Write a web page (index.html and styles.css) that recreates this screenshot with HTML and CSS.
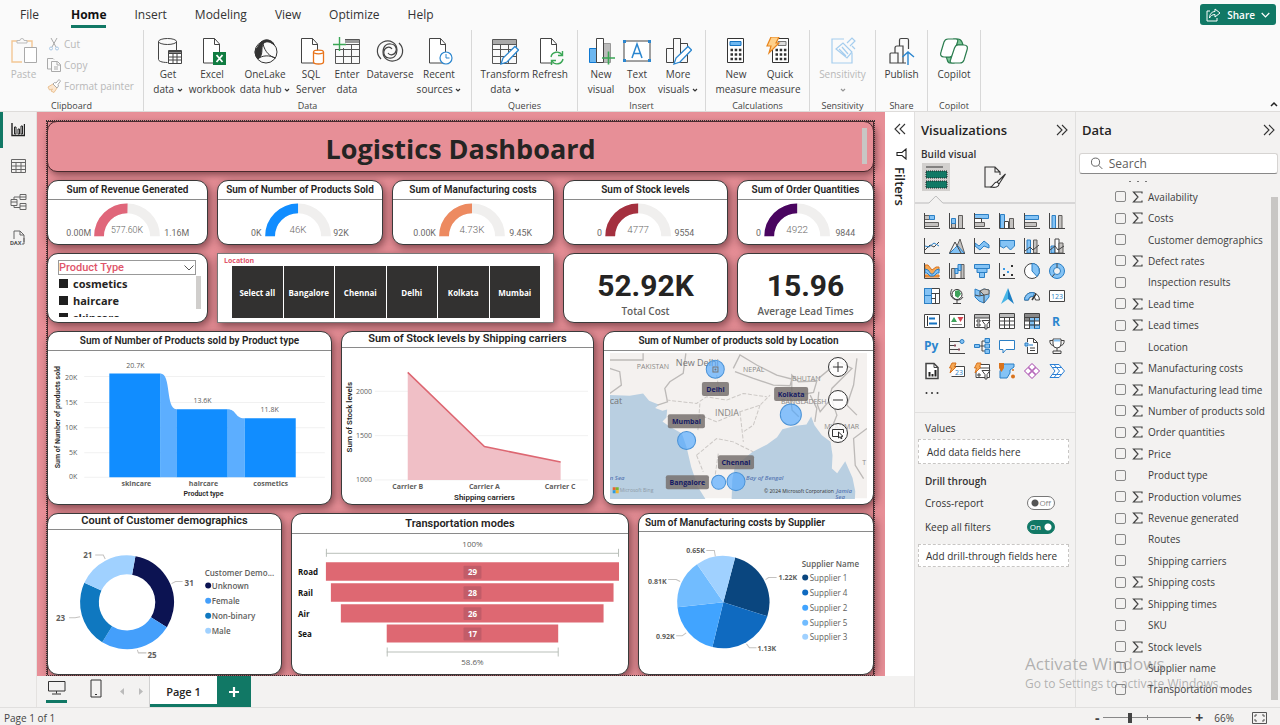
FILE: index.html
```html
<!DOCTYPE html>
<html lang="en">
<head>
<meta charset="utf-8">
<title>Logistics Dashboard</title>
<link rel="stylesheet" href="styles.css">
</head>
<body>
<svg class="defs" aria-hidden="true">
  <symbol id="sigma" viewBox="0 0 10 12"><path d="M9.5 2.5V1H1l4.5 5L1 11h8.5V9.5" fill="none" stroke="#444" stroke-width="1.2"/></symbol>
  <symbol id="chev" viewBox="0 0 6 6"><path d="M1 2l2 2 2-2" fill="none" stroke="#333" stroke-width="1.2"/></symbol>
  <symbol id="dbl" viewBox="0 0 12 12"><path d="M1 1l5 5-5 5M6 1l5 5-5 5" fill="none" stroke="#333" stroke-width="1.1"/></symbol>
  <symbol id="page" viewBox="0 0 28 28"><path d="M5.500 1.500h11l5 5.500v19h-16z" fill="#fff" stroke="#444"/><path d="M16.500 1.500v6h5" fill="none" stroke="#444"/></symbol>
</svg>
<div class="app">
  <header class="menubar">
    <nav class="menu">
      <button>File</button><button class="current">Home</button><button>Insert</button><button>Modeling</button><button>View</button><button>Optimize</button><button>Help</button>
    </nav>
    <button class="share">
      <svg width="15" height="14" viewBox="0 0 15 14" fill="none" stroke="#fff"><path d="M4 3H1v10h10v-3"/><path d="M9 1l5 4-5 4V6.500C6 6.500 4.500 8 3.500 10 3.500 6 6 3.500 9 3.500z"/></svg>
      Share
      <svg width="9" height="6" viewBox="0 0 9 6" fill="none" stroke="#fff" stroke-width="1.200"><path d="M.7 1l3.800 4L8.300 1"/></svg>
    </button>
  </header>

  <div class="ribbon">
    <section class="group clip">
      <div class="tools">
        <button class="tool off w50"><svg viewBox="0 0 28 28" fill="none"><path d="M7 4H2v21h10M17 4h5v6" stroke="#f3c795" stroke-width="1.400"/><path d="M7 6V3.500h3a2 2 0 0 1 4 0h3V6z" stroke="#bbb"/><path d="M14.500 10.500h12v15h-12z" stroke="#aaa" fill="#fff"/></svg><span>Paste</span></button>
        <div class="minis">
          <button class="mini"><svg viewBox="0 0 14 14" fill="none"><path d="M4 1l5 9M10 1L5 10" stroke="#aaa"/><circle cx="4" cy="11.500" r="1.500" stroke="#a9c8e6"/><circle cx="10" cy="11.500" r="1.500" stroke="#a9c8e6"/></svg>Cut</button>
          <button class="mini"><svg viewBox="0 0 14 14" fill="none" stroke="#aaa"><path d="M4 11H.5V.5H6l1 1"/><path d="M4.500 3.500h6l3 3v7h-9zM10 3.500V7h3M7 9h4M7 11h4"/></svg>Copy</button>
          <button class="mini"><svg viewBox="0 0 14 14" fill="none"><path d="M1 8l5-3 4 4-3 4.500-3-1.500 1.500-2-3 1z" fill="#fbe6cf" stroke="#eac193"/><path d="M6 5l4 4 1.500-2-.5-1.500L13.500 2 12 .5 9 4l-1.500-.5z" fill="#fff" stroke="#aaa"/></svg>Format painter</button>
        </div>
      </div>
      <h6>Clipboard</h6>
    </section>
    <section class="group">
      <div class="tools pad4">
        <button class="tool w40"><svg viewBox="0 0 28 28" fill="none" stroke="#444"><path d="M4.500 4.500v18c0 1.500 3 3 9 3M22.500 4.500V13"/><ellipse cx="13.500" cy="4.500" rx="9" ry="3"/><path d="M14.500 13.500h13v13h-13z" fill="#fff"/><path d="M14.500 14.500h13v2h-13z" fill="#888"/><path d="M14.500 20h13M14.500 23h13M19 17v9M23 17v9"/></svg><span>Get<br>data <svg class="cv"><use href="#chev"/></svg></span></button>
        <button class="tool w48"><svg viewBox="0 0 28 28"><use href="#page"/><path d="M15 15h13v13H15z" fill="#107c41"/><path d="M18.500 18l6 7M24.500 18l-6 7" stroke="#fff" stroke-width="1.800"/></svg><span>Excel<br>workbook</span></button>
        <button class="tool w58"><svg viewBox="0 0 28 28" fill="none" stroke="#333"><circle cx="15" cy="15" r="11"/><path d="M10 5a9 9 0 0 1 10-1c2 1 3 3 3 4-4-4-9-4-11-1-2 4 0 10-3 13l-2 2c-3-4-4-8-1-11z" fill="#333"/><path d="M12 7c2 8 7 13 13 14M7 22c4-4 12-4 17-1" /></svg><span>OneLake<br>data hub <svg class="cv"><use href="#chev"/></svg></span></button>
        <button class="tool w34"><svg viewBox="0 0 28 28"><use href="#page" x="-1"/><path d="M16.500 15v10c0 1.300 2 2 5 2s5-.7 5-2V15" fill="#fff" stroke="#e8741c" stroke-width="1.300"/><ellipse cx="21.500" cy="15" rx="5" ry="1.800" fill="#fff" stroke="#e8741c" stroke-width="1.300"/></svg><span>SQL<br>Server</span></button>
        <button class="tool w38"><svg viewBox="0 0 28 28" fill="none" stroke="#555"><path d="M12 2.500h14.500v24h-24V12M2.500 12.500h24M2.500 19.500h24M10.500 11v15M18.500 7v19M12 7.500h14.500"/><path d="M12 3h14v3H12z" fill="#999" stroke="none"/><path d="M0 7.500h13M6.500 0v14" stroke="#3aa655" stroke-width="1.400"/></svg><span>Enter<br>data</span></button>
        <button class="tool w48"><svg viewBox="0 0 28 28" fill="none" stroke="#444" stroke-width="1.200"><path d="M5 22C-1 16 1 8 7 5c7-3 14 1 14 8 0 6-4 9-8 8-4 0-6-4-5-7 1-4 6-5 8-2"/><path d="M23 6c6 6 4 14-2 17-7 3-14-1-14-8 0-6 4-9 8-8 4 0 6 4 5 7-1 4-6 5-8 2"/></svg><span>Dataverse</span></button>
        <button class="tool w50"><svg viewBox="0 0 28 28"><use href="#page" x="-1"/><circle cx="21" cy="21" r="6" fill="#fff" stroke="#2b86cf" stroke-width="1.200"/><path d="M21 17v4h3.500" fill="none" stroke="#2b86cf"/></svg><span>Recent<br>sources <svg class="cv"><use href="#chev"/></svg></span></button>
      </div>
      <h6>Data</h6>
    </section>
    <section class="group">
      <div class="tools pad8">
        <button class="tool w50"><svg viewBox="0 0 28 28" fill="none" stroke="#555"><path d="M1.500 2.500h24v24h-24zM1.500 12.500h24M1.500 19.500h24M9.500 7v19M17.500 7v19M1.500 7.500h24"/><path d="M2 3h23v4H2z" fill="#aaa" stroke="none"/><path d="M10 27l2-6L24 9.500l3.500 3.500L16 25z" fill="#fff" stroke="#2b86cf" stroke-width="1.300"/></svg><span>Transform<br>data <svg class="cv"><use href="#chev"/></svg></span></button>
        <button class="tool w40"><svg viewBox="0 0 28 28"><use href="#page" x="-1"/><circle cx="21" cy="21" r="7" fill="#fafafa"/><g fill="none" stroke="#3aa655" stroke-width="1.400"><path d="M15 20a6 6 0 0 1 11-2M27 22a6 6 0 0 1-11 2"/><path d="M26.500 14v4.500H22M15.500 28v-4.500H20"/></g></svg><span>Refresh</span></button>
      </div>
      <h6>Queries</h6>
    </section>
    <section class="group">
      <div class="tools pad8">
        <button class="tool w30"><svg viewBox="0 0 28 28"><path d="M2.500 11.500h7v14h-7z" fill="#6db7f0" stroke="#0f78d1"/><path d="M16.500 6.500h7v19h-7z" fill="#bbb" stroke="#999"/><path d="M9.500 1.500h7v24h-7z" fill="#fff" stroke="#444"/><path d="M15 21h13M21.500 14.500v13" stroke="#3aa655" stroke-width="1.600"/></svg><span>New<br>visual</span></button>
        <button class="tool w42"><svg viewBox="0 0 28 28"><path d="M1 4h26v20H1z" fill="#fff" stroke="#444"/><path d="M9 21l5-14 5 14M11 16.500h6" fill="none" stroke="#2b86cf" stroke-width="1.500"/><g fill="#2b86cf"><path d="M0 3h3v3H0zM25 3h3v3h-3zM0 22h3v3H0zM25 22h3v3h-3z"/></g></svg><span>Text<br>box</span></button>
        <button class="tool w40"><svg viewBox="0 0 28 28" fill="none"><path d="M2.500 11.500h7v14h-7zM9.500 1.500h7v24h-7zM16.500 6.500h7v19h-7z" stroke="#444"/><path d="M10 27l2-6L24 9.500l3.500 3.500L16 25z" fill="#fff" stroke="#2b86cf" stroke-width="1.300"/></svg><span>More<br>visuals <svg class="cv"><use href="#chev"/></svg></span></button>
      </div>
      <h6>Insert</h6>
    </section>
    <section class="group">
      <div class="tools pad8">
        <button class="tool w44"><svg viewBox="0 0 28 28"><path d="M5.500 1.500h16v24h-16z" fill="#fff" stroke="#333"/><path d="M8 4.500h11v4H8z" fill="#6db7f0" stroke="#1673c0"/><path d="M8.500 13h11M8.500 17.500h11M8.500 22h11" stroke="#333" stroke-width="2.500" stroke-dasharray="2.500 1.700"/></svg><span>New<br>measure</span></button>
        <button class="tool w44"><svg viewBox="0 0 28 28"><path d="M6.500 1.500h16v24h-16z" fill="#fff" stroke="#333"/><path d="M12 4.500h8v4h-8z" fill="#ddd" stroke="#777"/><path d="M9.500 13h11M9.500 17.500h11M9.500 22h11" stroke="#333" stroke-width="2.500" stroke-dasharray="2.500 1.700"/><path d="M5 0h8l-3 6h3L3 16l2-7H1z" fill="#ffd08a" stroke="#e8841c" stroke-width="1.200"/></svg><span>Quick<br>measure</span></button>
      </div>
      <h6>Calculations</h6>
    </section>
    <section class="group">
      <div class="tools">
        <button class="tool off w65"><svg viewBox="0 0 28 28" fill="none" stroke="#a5cdee" stroke-width="1.200"><path d="M15 2H3v24h20V16"/><path d="M7 12l7-6 9 9-5 6zM10 12l7 7M13 10l6 7"/><path d="M18 6l5-5 3 3-5 5M23 9l3 3"/></svg><span>Sensitivity<br><svg class="cv"><use href="#chev"/></svg></span></button>
      </div>
      <h6>Sensitivity</h6>
    </section>
    <section class="group">
      <div class="tools">
        <button class="tool w51"><svg viewBox="0 0 28 28" fill="none" stroke="#444" stroke-width="1.200"><path d="M2 26V17q0-1 1-1h7v10zM7 16v-5q0-2 2-2h6v17M11.500 9V3q0-1.500 1.500-1.500h6q1.500 0 1.500 1.500v9M10 26h8"/><path d="M20 28V15M14.500 20l5.500-5 6 5" stroke="#2b86cf" stroke-width="1.400"/></svg><span>Publish</span></button>
      </div>
      <h6>Share</h6>
    </section>
    <section class="group">
      <div class="tools">
        <button class="tool w52"><svg viewBox="0 0 28 28" stroke="#2b7d4f" stroke-width="1.200" fill="none"><path d="M14 2h4c2 0 3 1 4 3l1 3h-6zM14 26h-4c-3 0-2-3-4-6h8z" fill="#7fc99a"/><path d="M8 2h8c2 0 2 1 1.500 3l-4 12c-.7 2-1.500 3-4 3H4c-3 0-4-2-3-5l3-10c.7-2 2-3 4-3z" fill="#fff"/><path d="M19 8h5c3 0 4 2 3 5l-3 10c-.7 2-2 3-4 3h-8c-2 0-2-2-1.500-3l4-12c.7-2 2-3 3.500-3z" fill="#fff"/></svg><span>Copilot</span></button>
      </div>
      <h6>Copilot</h6>
    </section>
    <button class="collapse" aria-label="Collapse ribbon"><svg width="8" height="6" viewBox="0 0 8 6"><path d="M1 5l3-3 3 3" fill="none" stroke="#222" stroke-width="1.500"/></svg></button>
  </div>

  <div class="work">
    <nav class="rail">
      <button class="active" aria-label="Report view"><svg width="14" height="14" viewBox="0 0 14 14"><path d="M1 0v12.500h12.500V1" fill="none" stroke="#222" stroke-width="1.400"/><path d="M3.500 4h1.500v7H3.500zM7 6h1.500v5H7zM10 3h1.500v8H10z" fill="#fff" stroke="#222"/></svg></button>
      <button aria-label="Table view"><svg width="15" height="14" viewBox="0 0 15 14" fill="none" stroke="#666"><path d="M.5.500h14v13H.5zM.5 3.500h14M.5 7h14M.5 10.500h14M5 3.500v10M10 3.500v10"/></svg></button>
      <button aria-label="Model view"><svg width="17" height="16" viewBox="0 0 17 16" fill="none" stroke="#666"><path d="M1 5.500h6v6H1zM10 .5h6v5h-6zM10 9.500h6v6h-6zM1 8h6M10 3h6M10 12h6M4 5V3h6M4 11.500v2h6"/></svg></button>
      <button aria-label="DAX query view"><svg width="17" height="16" viewBox="0 0 17 16" fill="none" stroke="#666"><path d="M4 9V1h6l4 4v7M10 1v4h4M12 14h2V8"/><text x="0" y="15" class="dax">DAX</text></svg></button>
    </nav>

    <div class="center">
      <div class="stage">
        <main class="canvas">
          <div class="report">
            <div class="banner"><h1>Logistics Dashboard</h1><i class="thumb"></i></div>

            <div class="row five">
              <article class="card"><h2 class="t10">Sum of Revenue Generated</h2>
                <svg viewBox="48 200 159 45"><g class="arc"><path class="rest" d="M98.500 237a28.500 28.500 0 0 1 57 0"/><path stroke="#e0667a" d="M98.500 237a28.500 28.500 0 0 1 29-28.500"/></g><text class="g10" x="65" y="237">0.00M</text><text class="g9" x="127" y="234">577.60K</text><text class="g10" x="165" y="237">1.16M</text></svg></article>
              <article class="card"><h2 class="t10">Sum of Number of Products Sold</h2>
                <svg viewBox="218 200 164 45"><g class="arc"><path class="rest" d="M269.500 237a28.500 28.500 0 0 1 57 0"/><path stroke="#118dff" d="M269.500 237a28.500 28.500 0 0 1 28.500-28.500"/></g><text class="g10" x="250" y="237">0K</text><text class="g10 mid" x="298" y="234">46K</text><text class="g10" x="334" y="237">92K</text></svg></article>
              <article class="card"><h2 class="t10">Sum of Manufacturing costs</h2>
                <svg viewBox="394 200 160 45"><g class="arc"><path class="rest" d="M444.500 237a28.500 28.500 0 0 1 57 0"/><path stroke="#ed8a60" d="M444.500 237a28.500 28.500 0 0 1 28.500-28.500"/></g><text class="g10" x="413" y="237">0.00K</text><text class="g10 mid" x="473" y="234">4.73K</text><text class="g10" x="511" y="237">9.45K</text></svg></article>
              <article class="card"><h2 class="t10">Sum of Stock levels</h2>
                <svg viewBox="564 200 163 45"><g class="arc"><path class="rest" d="M609.500 237a28.500 28.500 0 0 1 57 0"/><path stroke="#a4303f" d="M609.500 237a28.500 28.500 0 0 1 28.500-28.500"/></g><text class="g10" x="596" y="237">0</text><text class="g10 mid" x="638" y="234">4777</text><text class="g10" x="675" y="237">9554</text></svg></article>
              <article class="card"><h2 class="t10">Sum of Order Quantities</h2>
                <svg viewBox="738 200 135 45"><g class="arc"><path class="rest" d="M768.500 237a28.500 28.500 0 0 1 57 0"/><path stroke="#4a0560" d="M768.500 237a28.500 28.500 0 0 1 28.500-28.500"/></g><text class="g10" x="755" y="237">0</text><text class="g10 mid" x="797" y="234">4922</text><text class="g10" x="836" y="237">9844</text></svg></article>
            </div>

            <div class="row five">
              <article class="card slicer">
                <button class="slicer-head">Product Type<svg width="10" height="6" viewBox="0 0 10 6"><path d="M.5.500L5 5 9.500.5" fill="none" stroke="#555"/></svg></button>
                <div class="options">
                  <label><input type="checkbox">cosmetics</label>
                  <label><input type="checkbox">haircare</label>
                  <label><input type="checkbox">skincare</label>
                  <i class="thumb"></i>
                </div>
              </article>
              <article class="card square wide">
                <h3>Location</h3>
                <div class="tiles"><button>Select all</button><button>Bangalore</button><button>Chennai</button><button>Delhi</button><button>Kolkata</button><button>Mumbai</button></div>
              </article>
              <article class="card kpi"><strong>52.92K</strong><span>Total Cost</span></article>
              <article class="card kpi"><strong>15.96</strong><span>Average Lead Times</span></article>
            </div>

            <div class="row three-a">
              <article class="card"><h2 class="t10 h19">Sum of Number of Products sold by Product type</h2>
                <svg viewBox="48 351 282 152">
                  <path class="gl" d="M84 376.500h240M84 402.500h240M84 427.500h240M84 452.500h240M84 477h240"/>
                  <path fill="#5caeff" d="M160 373.500c11 0 5 35.500 16 35.500V477h-16zM227 409c9 0 7 9 17 9V477h-17z"/>
                  <path fill="#118dff" d="M109 373.500h51V477h-51zM176 409h51V477h-51zM244 418h51V477h-51z"/>
                  <g class="s7 end"><text x="77" y="380">20K</text><text x="77" y="405">15K</text><text x="77" y="430">10K</text><text x="77" y="455">5K</text><text x="77" y="479">0K</text></g>
                  <g class="s7 mid"><text x="135" y="368">20.7K</text><text x="202" y="403">13.6K</text><text x="269" y="412">11.8K</text></g>
                  <g class="s7 mid bold"><text x="136" y="486">skincare</text><text x="203" y="486">haircare</text><text x="270" y="486">cosmetics</text></g>
                  <text class="d7 mid" x="203" y="496">Product type</text>
                  <text class="d7 mid" transform="translate(60 417) rotate(-90)">Sum of Number of products sold</text>
                </svg></article>
              <article class="card"><h2 class="t12 h16">Sum of Stock levels by Shipping carriers</h2>
                <svg viewBox="343 348 252 155">
                  <path class="gl" d="M376 391h214M376 435.500h214M376 480h214"/>
                  <path fill="#f0bfc6" d="M409 372l77 74.500 76.500 15.500v18H409z"/>
                  <path fill="none" stroke="#dd6772" stroke-width="1.500" d="M409 372l77 74.500 76.500 15.500"/>
                  <g class="s7 end"><text x="373" y="394">2000</text><text x="373" y="438">1500</text><text x="373" y="482">1000</text></g>
                  <g class="s7 mid bold"><text x="409" y="489">Carrier B</text><text x="486" y="489">Carrier A</text><text x="562" y="489">Carrier C</text></g>
                  <text class="d8 mid" x="486" y="500">Shipping carriers</text>
                  <text class="d8 mid" transform="translate(353 417) rotate(-90)">Sum of Stock levels</text>
                </svg></article>
              <article class="card"><h2 class="t10 h19">Sum of Number of products sold by Location</h2>
                <div class="map">
                  <svg viewBox="610 353 257 145" preserveAspectRatio="xMidYMid slice">
                    <path fill="#f4f1ef" d="M610 353h257v145H610z"/>
                    <g transform="translate(600 325) scale(.3333)">
                      <path fill="#b9cfe1" d="M30 210l60 2 40-7 18 22 30 12-12 10 22 8 14-4-2 24-12 12 20 14 38 22 14 40 14 60 20 60 30 48H30zM395 522l2-60 8-40 30-24 22-18 44-22 30-22 16-24 40-10 32-4 14-24 10 26 22 30 26 20 6 40-2 40 16 14 24-36 22 50 8 40-2 40z"/>
                      <g fill="none" stroke="#bdbab8" stroke-width="4"><path d="M30 105h45l55 0V85M30 130l30 10 5 40-35 25M258 85l-8 60-40 25-15 20 8 40-30 10M400 130l20-40 50 30 60 30 45 12-5 20-50-2-60-20-55-20M575 150l20 20 55-2-10 34-20 4-45-4zM655 160l60-50 40 20-60 60-10 40-25 30-8-20 4-40M770 100l-10 80-20 60 30 30M690 210l20 60-16 40M570 205l6 50 20 20M630 210l20 40-6 40M800 310l-40 30 5 80 25 40"/></g>
                      <g fill="none" stroke="#ccc8c5" stroke-width="3" stroke-dasharray="12 5"><path d="M200 225l90 10 30-20 60 10 50-20 70 10M270 300l30-30 50 20 70-30 60-20 30-30M290 390l60-50 50 10 60 30M350 150l10 60M300 235l-6 80M420 260l10 90M355 385l-10 70M290 390l20 50M480 240l-20 60-30 20"/></g>
                    </g>
                    <g class="place"><text x="637" y="369">PAKISTAN</text><text x="743" y="372">NEPAL</text><text x="792" y="381">BHUTAN</text><text x="781" y="404">BANGLADESH</text><text x="824" y="429">MYANMAR</text><text x="862" y="465">T</text></g>
                    <text class="place big" x="715" y="416">INDIA</text><text class="place city" x="676" y="366">New Delhi</text><text class="place city" x="610" y="404">cat</text>
                    <g class="sea"><text x="746" y="480">Bay of Bengal</text><text x="610" y="480">n Sea</text><text x="836" y="493">Jamia</text><text x="835" y="499">Sea</text></g>
                    <g fill="#4fa8ff" fill-opacity=".65" stroke="#4a92d6"><circle cx="715.300" cy="369.300" r="9"/><circle cx="790.700" cy="414.500" r="10.500"/><circle cx="686.700" cy="440.300" r="9"/><circle cx="736" cy="481.300" r="9"/><circle cx="718.700" cy="482" r="7"/></g>
                    <path d="M713 367h5v5h-5z" fill="none" stroke="#777"/><circle cx="715.500" cy="369.500" r="1" fill="#777"/>
                    <g fill="#77716f" fill-opacity=".85"><rect x="702" y="382" width="27" height="14" rx="2"/><rect x="774" y="387" width="34" height="14" rx="2"/><rect x="668" y="414" width="37" height="14" rx="2"/><rect x="718" y="455" width="36" height="14" rx="2"/><rect x="666" y="475" width="43" height="14" rx="2"/></g>
                    <g class="pin mid"><text x="715.500" y="392">Delhi</text><text x="791" y="397">Kolkata</text><text x="686.500" y="424">Mumbai</text><text x="736" y="465">Chennai</text><text x="687.500" y="485">Bangalore</text></g>
                    <path fill="#e8622c" d="M613 487h3v3h-3z"/><path fill="#7bb42c" d="M616 487h3v3h-3z"/><path fill="#2b9be0" d="M613 490h3v3h-3z"/><path fill="#f3b52a" d="M616 490h3v3h-3z"/>
                    <text class="credit" x="620" y="492">Microsoft Bing</text><text class="credit dark" x="764" y="493">© 2024 Microsoft Corporation</text>
                  </svg>
                  <div class="zoomers">
                    <button aria-label="Zoom in"><svg viewBox="0 0 18 18"><path d="M9 4v10M4 9h10"/></svg></button>
                    <button aria-label="Zoom out"><svg viewBox="0 0 18 18"><path d="M4 9h10"/></svg></button>
                    <button aria-label="Select area"><svg viewBox="0 0 18 18"><path d="M9 12.500H3.500v-7h11V9"/><path fill="#fff" d="M9.500 8v6l1.500-1.200 1 2 1-.5-1-2h2z"/></svg></button>
                  </div>
                </div></article>
            </div>

            <div class="row three-b">
              <article class="card"><h2 class="t12 h16">Count of Customer demographics</h2>
                <svg viewBox="48 530 232 143">
                  <g transform="rotate(-79.700 126.700 601.700)" fill="none" stroke-width="18.700">
                    <circle cx="126.700" cy="601.700" r="37.400" pathLength="100" stroke="#0c1352" stroke-dasharray="31 69"/>
                    <circle cx="126.700" cy="601.700" r="37.400" pathLength="100" stroke="#449ffb" stroke-dasharray="25 75" stroke-dashoffset="-31"/>
                    <circle cx="126.700" cy="601.700" r="37.400" pathLength="100" stroke="#0f78c0" stroke-dasharray="23 77" stroke-dashoffset="-56"/>
                    <circle cx="126.700" cy="601.700" r="37.400" pathLength="100" stroke="#a0d1ff" stroke-dasharray="21 79" stroke-dashoffset="-79"/>
                  </g>
                  <path class="lead" d="M95 554.500h8l2 4M171 583l4-2h7M69 617h6l5-1M137 649l1 3h8"/>
                  <g class="s8 bold"><text x="83" y="558">21</text><text x="184" y="585">31</text><text x="56" y="620">23</text><text x="147" y="657">25</text></g>
                  <g class="s8 semi"><text x="204" y="575">Customer Demo...</text><text x="211" y="588">Unknown</text><text x="211" y="603">Female</text><text x="211" y="618">Non-binary</text><text x="211" y="633">Male</text></g>
                  <circle cx="207.500" cy="585" r="3" fill="#0c1352"/><circle cx="207.500" cy="600" r="3" fill="#449ffb"/><circle cx="207.500" cy="615" r="3" fill="#0f78c0"/><circle cx="207.500" cy="630" r="3" fill="#a0d1ff"/>
                </svg></article>
              <article class="card"><h2 class="t12 h20">Transportation modes</h2>
                <svg viewBox="292 534 337 139">
                  <path fill="#de6872" d="M326 561.500h294V580H326zM331 582.500h283.500V601H331zM341 603.500h263.500V622H341zM387 624h172v18H387z"/>
                  <g fill="#c25c68"><rect x="464" y="565" width="18" height="13" rx="1"/><rect x="464" y="585.500" width="18" height="13" rx="1"/><rect x="464" y="606.500" width="18" height="13" rx="1"/><rect x="464" y="627" width="18" height="13" rx="1"/></g>
                  <path fill="none" stroke="#b9bfb9" d="M326.500 548v8M619.500 548v8M326 552.500h294M387.500 647v9M559 647v9M387 651.500h172"/>
                  <g class="s8 mid"><text x="473" y="546">100%</text><text x="473" y="665">58.6%</text></g>
                  <g class="s8 mid white"><text x="473" y="574">29</text><text x="473" y="595">28</text><text x="473" y="616">26</text><text x="473" y="636">17</text></g>
                  <g class="s8 black"><text x="298" y="574">Road</text><text x="298" y="595">Rail</text><text x="298" y="616">Air</text><text x="298" y="636">Sea</text></g>
                </svg></article>
              <article class="card"><h2 class="t10 h18 left">Sum of Manufacturing costs by Supplier</h2>
                <svg viewBox="640 532 233 141">
                  <path fill="#0a467f" d="M724 601.500L735.750 557A46 46 0 0 1 767.800 615.500z"/>
                  <path fill="#0f6ac0" d="M724 601.500L767.800 615.500A46 46 0 0 1 713.100 646.200z"/>
                  <path fill="#41a4ff" d="M724 601.500L713.100 646.200A46 46 0 0 1 678.300 606.600z"/>
                  <path fill="#71bcff" d="M724 601.500L678.300 606.600A46 46 0 0 1 697.800 563.700z"/>
                  <path fill="#a0d1ff" d="M724 601.500L697.800 563.700A46 46 0 0 1 735.750 557z"/>
                  <path class="lead" d="M707 550h8l1 6M766 579l3-2h8M669 579h8l4 2M677 635h6l4-3M747 643l3 4h7"/>
                  <g class="s7 bold"><text x="687" y="553">0.65K</text><text x="779" y="579">1.22K</text><text x="649" y="583">0.81K</text><text x="657" y="638">0.92K</text><text x="758" y="650">1.13K</text></g>
                  <g class="s8"><text class="semi" x="802" y="567">Supplier Name</text><text x="810" y="580">Supplier 1</text><text x="810" y="595">Supplier 4</text><text x="810" y="610">Supplier 2</text><text x="810" y="625">Supplier 5</text><text x="810" y="639">Supplier 3</text></g>
                  <circle cx="805.500" cy="577" r="3" fill="#0a467f"/><circle cx="805.500" cy="592" r="3" fill="#0f6ac0"/><circle cx="805.500" cy="607" r="3" fill="#41a4ff"/><circle cx="805.500" cy="622" r="3" fill="#71bcff"/><circle cx="805.500" cy="636" r="3" fill="#a0d1ff"/>
                </svg></article>
            </div>
          </div>
        </main>
        <aside class="filters">
          <button aria-label="Expand filters"><svg class="flip" width="12" height="12"><use href="#dbl"/></svg></button>
          <svg width="11" height="12" viewBox="0 0 11 12"><path d="M10 1v10L6 7.500H1v-3h5z" fill="none" stroke="#222" stroke-width="1.100"/></svg>
          <span>Filters</span>
        </aside>
      </div>
      <div class="tabs">
        <button class="device on" aria-label="Desktop layout"><svg width="18" height="14" viewBox="0 0 18 14" fill="none" stroke="#333"><path d="M.5.500h16.500v9.500H.5zM8.500 10v2.500M4 13h9"/></svg></button>
        <button class="device" aria-label="Mobile layout"><svg width="12" height="19" viewBox="0 0 12 19" fill="none" stroke="#333"><path d="M1 1h10v17H1z"/><path d="M5 15.500h2"/></svg></button>
        <button class="step" aria-label="Previous page"><svg width="4" height="7" viewBox="0 0 4 7"><path d="M4 0v7L0 3.500z" fill="#bbb"/></svg></button>
        <button class="step" aria-label="Next page"><svg width="4" height="7" viewBox="0 0 4 7"><path d="M0 0v7l4-3.500z" fill="#bbb"/></svg></button>
        <button class="pagetab">Page 1</button>
        <button class="add" aria-label="New page"><svg width="10" height="10" viewBox="0 0 10 10"><path d="M5 0v10M0 5h10" stroke="#fff" stroke-width="2.200"/></svg></button>
      </div>
    </div>

    <aside class="viz">
      <div class="panehead"><h4>Visualizations</h4><button aria-label="Collapse pane"><svg width="12" height="12"><use href="#dbl"/></svg></button></div>
      <h5>Build visual</h5>
      <div class="modes">
        <button class="picked" aria-label="Build visual"><svg width="28" height="28" viewBox="0 0 28 28"><path d="M4 4h17" stroke="#333"/><path d="M4 8h21v7H4zM4 18h21v7H4z" fill="#117865" stroke="#222" stroke-dasharray="1 1"/></svg></button>
        <button aria-label="Format visual"><svg width="24" height="24" viewBox="0 0 24 24" fill="none" stroke="#333" stroke-width="1.100"><path d="M9 22H2V2h10l5 5v3M12 2v5h5"/><path d="M22.500 9L14 17l2 2zM14 17c-3 0-3 3-6 5 4 1 8 0 8-3" fill="#fff"/></svg></button>
      </div>
      <svg class="notch" viewBox="0 0 161 9" preserveAspectRatio="none"><path d="M0 8h14l7-7 7 7h133" fill="none" stroke="#bbb"/></svg>
      <div class="visuals">
        <button><svg viewBox="0 0 16 16"><path class="g" d="M.5 2.500h5v4h-5zM.5 9.500h14v4H.5z"/><path class="b" d="M5.500 2.500h5v4h-5z"/><path class="k" d="M.5 0v15.500H16"/></svg></button>
        <button><svg viewBox="0 0 16 16"><path class="g" d="M9.500 2.500h4v13h-4zM2.500 10h4v5h-4z"/><path class="b" d="M2.500 5.500h4v5h-4z"/><path class="k" d="M.5 0v15.500H16"/></svg></button>
        <button><svg viewBox="0 0 16 16"><path class="b" d="M.5 1.500h14v4H.5z"/><path class="w" d="M.5 5.500h7v4h-7z"/><path class="g" d="M.5 9.500h10v4H.5z"/><path class="k" d="M.5 0v15.500H16"/></svg></button>
        <button><svg viewBox="0 0 16 16"><path class="b" d="M1.500 1.500h4v14h-4z"/><path class="w" d="M5.500 8.500h4v7h-4z"/><path class="g" d="M10.500 5.500h4v10h-4z"/><path class="k" d="M.5 0v15.500H16"/></svg></button>
        <button><svg viewBox="0 0 16 16"><path class="b" d="M.5 2.500h14v4H.5z"/><path class="g" d="M.5 9.500h12v4H.5z"/><path class="k" d="M.5 0v15.500H16"/></svg></button>
        <button><svg viewBox="0 0 16 16"><path class="b" d="M3 2.500h3.500v13H3z"/><path class="g" d="M9.500 2.500H13v13H9.500z"/><path class="k" d="M.5 0v15.500H16"/></svg></button>

        <button><svg viewBox="0 0 16 16"><path class="k" d="M.5 0v15.500H16M1 12l5-5 4 2 5-5"/><path class="bl" d="M1 8l4 1 5-4 5 3"/></svg></button>
        <button><svg viewBox="0 0 16 16"><path class="g" d="M5 15L11 1l4.500 14z"/><path class="b" d="M.5 15.500l5-5 3-3 7 8z"/><path class="k" d="M.5 15L6 4l6 11M.5 15.500H16"/></svg></button>
        <button><svg viewBox="0 0 16 16"><path class="b" d="M1 5l4 3 5-5 5 4v3l-5-2-4 4-5-4z"/><path class="k" d="M.5 0v15.500H16"/></svg></button>
        <button><svg viewBox="0 0 16 16"><path class="b" d="M1 2.500h14.500V8l-4 4-4-4-3 2-3.500-2z"/><path class="k" d="M.5 0v15.500H16"/></svg></button>
        <button><svg viewBox="0 0 16 16"><path class="b" d="M3 2h3.500v13H3z"/><path class="g" d="M9.500 2H13v13H9.500z"/><path class="k" d="M.5 0v15.500H16M1 13l5-4 3 3 6-5"/></svg></button>
        <button><svg viewBox="0 0 16 16"><path class="b" d="M2 8h4v7H2z"/><path class="w" d="M6 1h4v14H6z"/><path class="g" d="M10 5h4v10h-4z"/><path class="k" d="M.5 0v15.500H16M1 12l5-4 3 4 6-4"/></svg></button>

        <button><svg viewBox="0 0 16 16"><path class="o" d="M1 2h3l4 5 4-3h3v4h-2l-4 5H6L3 8H1zM1 12h14v2H1z"/><path class="b" d="M1 6l3 1 3 4h2l3-4 3-1v4h-2l-3 3H6l-3-3H1z"/><path class="k" d="M.5 0v15.500H16"/></svg></button>
        <button><svg viewBox="0 0 16 16"><path class="g" d="M2.500 5.500H6v10H2.500zM12 1.500h3v14h-3z"/><path class="b" d="M6 5.500h3v5H6zM9 1.500h3v6H9z"/><path class="k" d="M.5 0v15.500H16"/></svg></button>
        <button><svg viewBox="0 0 16 16"><path class="b" d="M.5 1.500h15v4H.5zM3 5.500h10v4H3zM5.500 9.500h5v5h-5z"/></svg></button>
        <button><svg viewBox="0 0 16 16"><path d="M4 11h2v2H4zM12 2h2v2h-2zM12 11h2v2h-2z" fill="#333"/><path d="M4 5h2v2H4zM8 8h2v2H8z" fill="#3a9be8"/><path class="k" d="M.5 0v15.500H16"/></svg></button>
        <button><svg viewBox="0 0 16 16"><circle class="w" cx="8" cy="8" r="7.500"/><path class="b" d="M8 .5a7.500 7.500 0 0 1 5 13L8 8z"/></svg></button>
        <button><svg viewBox="0 0 16 16"><circle cx="8" cy="8" r="5.500" fill="none" stroke="#84c3f5" stroke-width="4"/><circle class="bl" cx="8" cy="8" r="7.500"/><circle class="bl" cx="8" cy="8" r="3.500"/><path class="k" d="M8 .5v4M3 14l2.500-3"/></svg></button>

        <button><svg viewBox="0 0 16 16"><path class="w" d="M.5.500h15v15H.5z"/><path class="b" d="M.5.500h7v7h-7zM.5 7.500h7v8h-7z"/><path class="k" d="M7.500 5.500h8M11.500 5.500v10M7.500 10.500h4"/></svg></button>
        <button><svg viewBox="0 0 16 16"><circle cx="8" cy="6.500" r="5" fill="#fff" stroke="#333"/><path d="M6 3l4-1 2 4-3 4-3-2z" fill="#3fa35b"/><path class="k" d="M3 1c-3 5-1 10 5 11 3 0 5-1 6-3M8 12v3M4 15.500h8"/></svg></button>
        <button><svg viewBox="0 0 16 16"><path class="b" d="M1 1l5 2 4-2 5 1v7l-5 6-5-2-4-4z"/><path class="g" d="M6 3l4-2 5 1v4l-5 1z"/><path class="k" d="M1 7l4 1 5-1v8M6 3v4"/></svg></button>
        <button><svg viewBox="0 0 16 16"><path d="M9 0L2 16l7-5z" fill="#47b5e6"/><path d="M9 0l6 16-6-5z" fill="#1c7fc4"/></svg></button>
        <button><svg viewBox="0 0 16 16"><path class="w" d="M.5 12a7.500 7.500 0 0 1 15 0h-4a3.500 3.500 0 0 0-7 0z"/><path class="b" d="M.5 12a7.500 7.500 0 0 1 10-7L9 8.500A3.500 3.500 0 0 0 4.500 12z"/><path d="M8 12l4-6" stroke="#333" stroke-width="1.500"/></svg></button>
        <button><svg viewBox="0 0 16 16"><path class="w" d="M.5 2.500h15v11H.5z"/><text class="num" x="2" y="11">123</text></svg></button>

        <button><svg viewBox="0 0 16 16"><path class="w" d="M.5 1.500h15v13H.5z"/><path d="M3.500 3v10" stroke="#333"/><path d="M5 5.500h6M5 10.500h8" stroke="#1673c0" stroke-width="2"/></svg></button>
        <button><svg viewBox="0 0 16 16"><path class="w" d="M.5 1.500h15v13H.5z"/><path d="M2 9l3-5 3 5z" fill="#3fa35b"/><path d="M8.500 4h6l-3 5z" fill="#d64550"/><path d="M3 11.500h10" stroke="#888"/></svg></button>
        <button><svg viewBox="0 0 16 16"><path class="w" d="M.5 1.500h15v13H.5z"/><path d="M1 2h14v3H1z" fill="#bbb"/><path class="k" d="M.5 5h15M3 7h3v2H3zM3 11h3v2H3z"/><path class="w" d="M8 7.500h8l-3 4V16h-2v-4.500z"/></svg></button>
        <button><svg viewBox="0 0 16 16"><path class="w" d="M.5.500h15v15H.5z"/><path d="M1 1h14v3H1z" fill="#bbb"/><path class="k" d="M.5 4.500h15M.5 8h15M.5 12h15M5.500 4v11M10.500 4v11"/></svg></button>
        <button><svg viewBox="0 0 16 16"><path class="w" d="M.5.500h15v15H.5z"/><path d="M1 1h14v3H1zM1 4h4v4H1z" fill="#888"/><path d="M6 4h9v4h-5v8H6z" fill="#84c3f5"/><path class="b" d="M5.500 8h5v4h-5zM10.500 12h5v3.500h-5z"/><path class="k" d="M.5 4.500h15M.5 8h15M.5 12h15M5.500 4v11M10.500 4v11"/></svg></button>
        <button><svg viewBox="0 0 16 16"><text class="letter" x="3" y="13">R</text></svg></button>

        <button><svg viewBox="0 0 16 16"><text class="letter" x="0" y="12">Py</text></svg></button>
        <button><svg viewBox="0 0 16 16"><path class="k" d="M.5 0v15.500H16M1 3.500h11M1 7.500h5M1 11.500h8"/><circle class="b" cx="13" cy="3.500" r="2"/><path d="M5 6.500h2v2H5zM9 10.500h2v2H9z" fill="#8a4a5a"/></svg></button>
        <button><svg viewBox="0 0 16 16"><path class="k" d="M5 8h3M8 3v10M8 3h3M8 8h3M8 13h3"/><path class="b" d="M.5 6.500h5v3h-5zM11 .5h4.500v4H11zM11 6h4.500v4H11zM11 11.500h4.500v4H11z"/></svg></button>
        <button><svg viewBox="0 0 16 16"><path d="M.5 2.500h15v9H7L4 15v-3.500H.5z" fill="#fff" stroke="#2b7fc4"/></svg></button>
        <button><svg viewBox="0 0 16 16"><path class="w" d="M3.500 4V.5h6l4 4v11h-10V9"/><path class="k" d="M9.500.5v4h4M6 10h5M6 12.500h5"/><path class="b" d="M1 5h3v3H1z"/><path d="M5 7h4" stroke="#1673c0"/></svg></button>
        <button><svg viewBox="0 0 16 16"><path class="w" d="M4 1h8v5q0 4-4 4T4 6z"/><path class="k" d="M4 2.500H.8q0 5 4 5M12 2.500h3.200q0 5-4 5M8 10v3M4 15.500h8v-2.500H4z"/><path d="M5 1.500h6v2H5z" fill="#84c3f5"/></svg></button>

        <button><svg viewBox="0 0 16 16"><path class="w" d="M2 .5h8l4 4v11H2z" stroke-width="1.500"/><path class="k" d="M10 .5v4h4"/><path d="M4.500 9h2v4.500h-2zM7.500 11h2v2.500h-2zM10.500 7h2v6.500h-2z" fill="#222"/></svg></button>
        <button><svg viewBox="0 0 16 16"><path class="w" d="M3 3.500h12.500v10h-13"/><text class="num" x="6" y="12">23</text><path class="o" d="M3 0h4L5.500 4H7L1 10l1.500-5H.5z"/></svg></button>
        <button><svg viewBox="0 0 16 16"><path class="w" d="M4 1.500h11.500v13H2V9"/><path class="k" d="M6 5h9M4 11h2v2H4z"/><path class="w" d="M8 7.500h8l-3 4V16h-2v-4.500z"/><path class="o" d="M3 0h4L5.500 4H7L1 10l1.500-5H.5z"/></svg></button>
        <button><svg viewBox="0 0 16 16"><path class="b" d="M5 1h10v3l-4 3v3l-3 5H1V8z"/><path d="M0 0h5v5L2.500 9 0 5z" fill="#d9731c"/><circle cx="14" cy="13.500" r="2" fill="#d9731c"/><circle cx="14" cy="7" r="1" fill="#d9731c"/></svg></button>
        <button><svg viewBox="0 0 16 16" fill="#fff" stroke="#a23ba8"><path d="M8 .5l3.500 3.500L8 7.500 4.500 4zM8 8.500l3.500 3.500L8 15.500 4.500 12zM4 4.500L7.500 8 4 11.500.5 8zM12 4.500L15.500 8 12 11.500 8.500 8z"/></svg></button>
        <button><svg viewBox="0 0 16 16" fill="#fff" stroke="#2b7fd4"><path d="M1 1.500h9l5.500 6.500-5.500 6.500H1L6 8zM5 1.500L10.500 8 5 14.500M3 4.500h9M3 11.500h9"/></svg></button>
      </div>
      <button class="more" aria-label="More visuals"><svg width="14" height="4" viewBox="0 0 14 4" fill="#333"><circle cx="1.500" cy="2" r="1"/><circle cx="7" cy="2" r="1"/><circle cx="12.500" cy="2" r="1"/></svg></button>
      <div class="wells">
        <p>Values</p>
        <div class="well">Add data fields here</div>
        <p class="strong">Drill through</p>
        <label class="switch">Cross-report<input type="checkbox"><span class="off-t">Off</span></label>
        <label class="switch">Keep all filters<input type="checkbox" checked><span class="on-t">On</span></label>
        <div class="well small">Add drill-through fields here</div>
      </div>
    </aside>

    <aside class="data">
      <div class="panehead"><h4>Data</h4><button aria-label="Collapse pane"><svg width="12" height="12"><use href="#dbl"/></svg></button></div>
      <label class="search"><svg width="13" height="13" viewBox="0 0 13 13" fill="none" stroke="#555"><circle cx="5" cy="5" r="4.500"/><path d="M8.500 8.500l4 4"/></svg><input type="search" placeholder="Search" aria-label="Search"></label>
      <div class="cut"></div>
      <div class="listwrap">
        <div class="fields">
          <label><input type="checkbox"><svg><use href="#sigma"/></svg>Availability</label>
          <label><input type="checkbox"><svg><use href="#sigma"/></svg>Costs</label>
          <label><input type="checkbox"><svg></svg>Customer demographics</label>
          <label><input type="checkbox"><svg><use href="#sigma"/></svg>Defect rates</label>
          <label><input type="checkbox"><svg></svg>Inspection results</label>
          <label><input type="checkbox"><svg><use href="#sigma"/></svg>Lead time</label>
          <label><input type="checkbox"><svg><use href="#sigma"/></svg>Lead times</label>
          <label><input type="checkbox"><svg></svg>Location</label>
          <label><input type="checkbox"><svg><use href="#sigma"/></svg>Manufacturing costs</label>
          <label><input type="checkbox"><svg><use href="#sigma"/></svg>Manufacturing lead time</label>
          <label><input type="checkbox"><svg><use href="#sigma"/></svg>Number of products sold</label>
          <label><input type="checkbox"><svg><use href="#sigma"/></svg>Order quantities</label>
          <label><input type="checkbox"><svg><use href="#sigma"/></svg>Price</label>
          <label><input type="checkbox"><svg></svg>Product type</label>
          <label><input type="checkbox"><svg><use href="#sigma"/></svg>Production volumes</label>
          <label><input type="checkbox"><svg><use href="#sigma"/></svg>Revenue generated</label>
          <label><input type="checkbox"><svg></svg>Routes</label>
          <label><input type="checkbox"><svg></svg>Shipping carriers</label>
          <label><input type="checkbox"><svg><use href="#sigma"/></svg>Shipping costs</label>
          <label><input type="checkbox"><svg><use href="#sigma"/></svg>Shipping times</label>
          <label><input type="checkbox"><svg></svg>SKU</label>
          <label><input type="checkbox"><svg><use href="#sigma"/></svg>Stock levels</label>
          <label><input type="checkbox"><svg></svg>Supplier name</label>
          <label><input type="checkbox"><svg></svg>Transportation modes</label>
        </div>
        <i class="scroll"></i>
      </div>
    </aside>
  </div>

  <footer class="status">
    <span>Page 1 of 1</span>
    <div class="zoom"><button aria-label="Zoom out">-</button><input type="range" min="0" max="100" value="29" aria-label="Zoom"><button aria-label="Zoom in">+</button><span>66%</span>
      <button class="fit" aria-label="Fit to page"><svg width="15" height="12" viewBox="0 0 15 12" fill="none" stroke="#555"><path d="M.5.500h14v11H.5z"/><path d="M3 5V3h2M10 3h2v2M12 7v2h-2M5 9H3V7"/></svg></button></div>
  </footer>
  <div class="watermark"><b>Activate Windows</b><span>Go to Settings to activate Windows.</span></div>
</div>
</body>
</html>
```
FILE: styles.css
```css
* { box-sizing: border-box; }
body { margin: 0; font-family: "Open Sans", "Noto Sans", sans-serif; font-size: 11px; color: #333; background: #f3f2f1; }
button { font: inherit; color: inherit; border: 0; padding: 0; margin: 0; background: none; }
h1, h2, h3, h4, h5, h6, p { margin: 0; }
.defs { display: none; }
.app { display: flex; flex-direction: column; height: 100vh; position: relative; overflow: hidden; }

/* Menu and ribbon */
.menubar { display: flex; justify-content: space-between; align-items: flex-start; height: 30px; flex: none; background: #fafafa; }
.menu { display: flex; gap: 28px; padding-left: 20px; font-size: 12px; }
.menu button { height: 28px; padding-top: 3px; border-bottom: 3px solid transparent; }
.menu .current { font-weight: 700; color: #111; border-color: #117865; margin-left: 4px; }
.share { display: flex; align-items: center; gap: 6px; height: 21px; margin: 4px 4px 0 0; padding: 0 6px; background: #117865; color: #fff; border-radius: 3px; font-size: 10px; font-weight: 600; }
.ribbon { display: flex; height: 82px; flex: none; background: #fafafa; border-bottom: 1px solid #dedcda; position: relative; }
.group { display: flex; flex-direction: column; justify-content: space-between; border-right: 1px solid #d8d8d8; }
.group h6 { font-size: 9px; font-weight: 400; line-height: 11px; text-align: center; color: #444; }
.tools { display: flex; padding-top: 7px; padding-right: 7px; }
.group:nth-child(n+6) .tools { padding-right: 0; }
.clip .tools { padding-right: 0; }
.clip { width: 144px; flex: none; }
.pad4 { padding-left: 4px; } .pad8 { padding-left: 8px; }
.tool { display: flex; flex-direction: column; align-items: center; font-size: 10px; line-height: 15px; white-space: nowrap; color: #3b3b3b; gap: 2px; flex: none; }
.tool > svg { width: 28px; height: 28px; flex: none; }
.tool span { display: block; text-align: center; }
.cv { width: 6px; height: 6px; vertical-align: middle; }
.off, .off .cv { color: #b8b8b8; } .off .cv { opacity: .5; }
.w30 { width: 30px; } .w34 { width: 34px; } .w38 { width: 38px; } .w40 { width: 40px; } .w42 { width: 42px; } .w44 { width: 44px; }
.w48 { width: 48px; } .w50 { width: 50px; } .w51 { width: 51px; } .w52 { width: 52px; } .w58 { width: 58px; } .w65 { width: 65px; }
.clip .w50 { width: 47px; }
.minis { display: flex; flex-direction: column; margin-top: -4px; }
.mini { display: flex; align-items: center; gap: 3px; height: 21px; white-space: nowrap; color: #b8b8b8; font-size: 10px; }
.mini svg { width: 14px; height: 14px; flex: none; }
.collapse { position: absolute; right: 2px; bottom: 4px; line-height: 0; }

/* Work area */
.work { display: flex; flex: 1; min-height: 0; }
.rail { width: 37px; flex: none; display: flex; flex-direction: column; border-right: 1px solid #e4e2e0; }
.rail button { height: 36px; border-left: 3px solid transparent; padding: 0 3px 2px 0; }
.rail button svg { vertical-align: middle; }
.rail .active { border-color: #117865; }
.dax { font: 700 6px Roboto, sans-serif; fill: #555; stroke: none; }
.center { flex: 1; min-width: 0; display: flex; flex-direction: column; }
.stage { flex: 1; min-height: 0; display: flex; }
.canvas { flex: 1; min-width: 0; background: #e78f97; padding: 8px 10px 0 9px; display: flex; overflow: hidden; }
.report { flex: 1; min-width: 0; display: grid; grid-template-rows: minmax(0, 51fr) minmax(0, 65fr) minmax(0, 70fr) minmax(0, 173fr) minmax(0, 162fr); gap: 8px; border: 1px dotted #333; box-shadow: inset 1px 1px 0 #4a2a2e, inset -1px 0 0 #4a2a2e; }
.row { display: grid; gap: 9px; min-height: 0; }
.five { grid-template-columns: minmax(0, 161fr) minmax(0, 166fr) minmax(0, 162fr) minmax(0, 165fr) minmax(0, 137fr); }
.three-a { grid-template-columns: minmax(0, 285fr) minmax(0, 253fr) minmax(0, 271fr); }
.three-b { grid-template-columns: minmax(0, 235fr) minmax(0, 338fr) minmax(0, 236fr); }
.banner { display: flex; align-items: center; justify-content: center; position: relative; padding-top: 4px; border: 1px solid #4a2a2e; border-radius: 10px; background: #e78f97; box-shadow: 2px 3px 7px rgba(70, 30, 35, .6); }
.banner h1 { font-size: 27px; line-height: 36px; color: #252423; }
.banner .thumb { position: absolute; right: 6px; top: 6px; bottom: 7px; width: 5px; background: #c8c6c4; }
.card { min-width: 0; min-height: 0; display: flex; flex-direction: column; background: #fff; border: 1px solid #3a3a3a; border-radius: 11px; box-shadow: 2px 3px 8px rgba(70, 30, 35, .65); overflow: hidden; }
.card > svg { flex: 1; width: 100%; min-height: 0; }
.card h2 { font-family: Roboto, sans-serif; font-weight: 600; color: #252423; text-align: center; border-bottom: 1px solid #8a8a8a; white-space: nowrap; flex: none; line-height: 18px; }
.t10 { font-size: 10px; } .t12 { font-size: 11px; }
.card .h16 { line-height: 14px; padding-bottom: 1px; } .card .h19 { line-height: 18px; } .card .h20 { line-height: 19px; } .card .h18 { line-height: 17px; }
.card .left { text-align: left; padding-left: 6px; }
.wide { grid-column: span 2; }
.square { border-radius: 0; border-color: #777; padding: 1px 13px 4px 14px; }
.square h3 { font-size: 7px; line-height: 11px; margin-left: -8px; color: #e0556a; }
.tiles { flex: 1; display: grid; grid-template-columns: repeat(6, minmax(0, 1fr)); gap: 1px; }
.tiles button { background: #323130; color: #fff; font-size: 8px; font-weight: 700; }
.slicer { padding: 6px 6px 5px 10px; }
.slicer-head { display: flex; justify-content: space-between; align-items: center; height: 15px; flex: none; margin-right: 5px; border: 1px solid #999; color: #e0556a; font: 500 11px Roboto, sans-serif; padding-right: 1px; }
.options { position: relative; flex: 1; min-height: 0; overflow: hidden; }
.options label { display: flex; align-items: center; gap: 5px; height: 17px; font-size: 11px; font-weight: 700; color: #252423; }
.options input { appearance: none; width: 9px; height: 9px; margin: 0 0 0 1px; background: #1f1f1f; }
.options .thumb { position: absolute; right: 0; top: 1px; width: 5px; height: 33px; background: #d0cecc; }
.kpi { align-items: center; justify-content: center; padding-top: 8px; }
.kpi strong { font: 700 30px/38px Roboto, sans-serif; color: #252423; }
.kpi span { font-size: 10px; font-weight: 600; line-height: 13px; color: #605e5c; }

/* Chart parts */
text { font-family: "Open Sans", sans-serif; fill: #605e5c; }
.arc path { fill: none; stroke-width: 10px; } .arc .rest { stroke: #f0efee; }
.g10 { font-family: Roboto, sans-serif; font-size: 9px; fill: #6b6967; }
.g10.mid { font-size: 10px; font-weight: 300; }
.g9 { font-family: Roboto, sans-serif; font-size: 9px; font-weight: 300; text-anchor: middle; }
.mid { text-anchor: middle; } .end { text-anchor: end; }
.bold text { font-weight: 700; } .semi, .semi text { font-weight: 600; }
.s7 { font-size: 7px; } .s8 { font-size: 8px; }
.d7, .d8 { font-family: Roboto, sans-serif; font-weight: 600; fill: #252423; }
.d7 { font-size: 7px; } .d8 { font-size: 8px; }
.white text { fill: #fff; font-weight: 700; } .black text { fill: #111; font-weight: 700; }
.gl { stroke: #f1f1f1; stroke-width: 1px; }
.lead { fill: none; stroke: #c4c2c0; stroke-width: 1px; }
.map { position: relative; flex: 1; min-height: 0; margin: 2px 6px 5px; }
.map > svg { width: 100%; height: 100%; display: block; }
.place, .place text { font-size: 7px; fill: #8b8987; }
.place.big { font-size: 9px; } .place.city { font-size: 9px; fill: #777; }
.sea text { font-size: 6px; font-weight: 600; font-style: italic; fill: #5878b4; }
.pin text { font-size: 7px; font-weight: 700; fill: #151a63; }
.credit { font-size: 5px; fill: #8d9aa6; } .credit.dark { fill: #333; }
.zoomers { position: absolute; right: 19px; top: 4px; display: flex; flex-direction: column; gap: 13px; }
.zoomers button { display: block; width: 20px; height: 20px; border: 1px solid #333; border-radius: 50%; background: rgba(255, 255, 255, .8); line-height: 0; }
.zoomers svg { width: 18px; height: 18px; fill: none; stroke: #333; }

/* Filters strip and page tabs */
.filters { width: 29px; flex: none; background: #fff; display: flex; flex-direction: column; align-items: center; padding-top: 11px; gap: 13px; }
.filters button { line-height: 0; }
.filters > svg { margin-left: 4px; flex: none; }
.filters span { writing-mode: vertical-rl; font-size: 13px; font-weight: 600; color: #252423; line-height: 16px; margin-top: -6px; }
.flip { transform: scaleX(-1); }
.tabs { height: 31px; flex: none; display: flex; padding-left: 9px; }
.device { width: 21px; height: 27px; border-bottom: 3px solid transparent; line-height: 0; }
.device.on { border-color: #117865; }
.device + .device { margin-left: 18px; }
.step { width: 19px; line-height: 0; }
.device + .step { margin-left: 6px; }
.pagetab { margin-left: -1px; width: 68px; background: #fff; border-left: 1px solid #d0d0d0; box-shadow: inset 0 -3px 0 #117865; font-size: 11px; font-weight: 600; color: #252423; }
.add { width: 34px; background: #117865; line-height: 0; }

/* Side panes */
.viz { width: 161px; flex: none; border-left: 1px solid #e0dfde; display: flex; flex-direction: column; }
.data { width: 205px; flex: none; border-left: 1px solid #e0dfde; display: flex; flex-direction: column; }
.panehead { display: flex; justify-content: space-between; align-items: center; height: 36px; flex: none; padding: 0 7px 0 6px; }
.panehead h4 { font-size: 13px; font-weight: 600; color: #252423; }
.panehead button { line-height: 0; }
.data .panehead { padding-right: 5px; }
.viz h5 { font-size: 10px; font-weight: 600; line-height: 12px; padding-left: 6px; margin-bottom: 3px; }
.modes { display: flex; gap: 33px; align-items: center; padding-left: 7px; height: 28px; flex: none; }
.modes button { line-height: 0; }
.picked { background: #d2d0ce; }
.notch { width: 100%; height: 9px; flex: none; margin-top: 4px; }
.visuals { display: grid; grid-template-columns: repeat(6, 25px); grid-auto-rows: 25px; padding-left: 4px; margin-top: 4px; }
.visuals button { display: flex; align-items: center; justify-content: center; }
.visuals svg { width: 16px; height: 16px; overflow: visible; }
.b { fill: #84c3f5; stroke: #2b7fc4; } .g { fill: #c4c2c0; stroke: #605e5c; } .w { fill: #fff; stroke: #444; }
.k { fill: none; stroke: #444; } .bl { fill: none; stroke: #2b7fc4; } .o { fill: #f5a855; stroke: #d9731c; }
.num { font-size: 7px; fill: #2b7fc4; } .letter { font-size: 12px; font-weight: 700; fill: #2b86cf; }
.more { text-align: left; padding: 8px 0 0 10px; line-height: 0; height: 29px; display: flex; }
.wells { border-top: 1px solid #e0dfde; padding: 7px 6px 0 3px; }
.wells p { line-height: 16px; padding-left: 7px; font-size: 10px; }
.wells .strong { font-weight: 600; margin-top: 9px; }
.well { height: 25px; margin-top: 3px; border: 1px dashed #c8c6c4; background: #fff; display: flex; align-items: center; padding-left: 8px; white-space: nowrap; font-size: 10px; }
.well.small { height: 23px; padding-left: 7px; margin-top: 5px; }
.switch { position: relative; display: flex; align-items: center; justify-content: space-between; height: 24px; padding: 0 14px 0 7px; font-size: 10px; }
.wells .strong + .switch { margin-top: 2px; }
.switch input { appearance: none; width: 28px; height: 14px; margin: 0; border: 1px solid #777; border-radius: 7px; background: radial-gradient(circle at 7px 6px, #555 3px, #fff 4px); }
.switch input:checked { border-color: #117865; background: radial-gradient(circle at 20px 6px, #fff 3px, #117865 4px); }
.switch span { position: absolute; font-size: 8px; line-height: 14px; }
.off-t { right: 18px; color: #888; } .on-t { right: 28px; color: #fff; }
.search { display: flex; align-items: center; gap: 6px; height: 21px; flex: none; margin: 5px 2px 0 3px; padding-left: 11px; background: #fff; border: 1px solid #d6d4d2; border-bottom-color: #888; border-radius: 3px; }
.search input { border: 0; outline: 0; padding: 0; width: 100%; font: 12px "Open Sans", sans-serif; background: none; }
.search input::placeholder { color: #605e5c; }
.cut { width: 18px; height: 1px; background: repeating-linear-gradient(90deg, #777 0 2px, transparent 2px 8px); margin: 7px 0 4px 53px; }
.listwrap { flex: 1; min-height: 0; display: flex; padding-bottom: 7px; }
.fields { flex: 1; display: flex; flex-direction: column; padding-left: 39px; }
.fields label { flex: 1; display: flex; align-items: center; white-space: nowrap; font-size: 10px; color: #3b3b3b; }
.fields input { appearance: none; width: 11px; height: 11px; margin: 0 6px 0 0; border: 1px solid #888; border-radius: 2px; flex: none; }
.fields svg { width: 11px; height: 12px; margin-right: 5px; flex: none; }
.scroll { width: 7px; background: #c8c6c4; margin: 11px 2px 0 0; flex: none; }

/* Status bar */
.status { height: 18px; flex: none; display: flex; justify-content: space-between; align-items: center; padding: 2px 13px 0 4px; border-top: 1px solid #e0dfde; font-size: 10px; color: #444; }
.zoom { display: flex; align-items: center; }
.zoom button { width: 12px; font-size: 14px; font-weight: 700; line-height: 14px; }
.zoom input { appearance: none; width: 88px; height: 12px; margin: 0 2px 0 0; background: linear-gradient(#888, #888) 50% 50% / 100% 1px no-repeat, linear-gradient(#777, #777) 50% 50% / 1px 5px no-repeat; }
.zoom input::-webkit-slider-thumb { appearance: none; width: 4px; height: 10px; background: #444; }
.zoom span { margin: 0 18px 0 9px; font-size: 10px; }
.zoom .fit { width: 15px; line-height: 0; }
.watermark { position: absolute; right: 26px; bottom: 32px; display: flex; flex-direction: column; color: rgba(120, 120, 120, .55); pointer-events: none; width: 229px; white-space: nowrap; }
.watermark b { font-size: 17px; font-weight: 400; line-height: 22px; }
.watermark span { font-size: 12px; line-height: 18px; }
```
